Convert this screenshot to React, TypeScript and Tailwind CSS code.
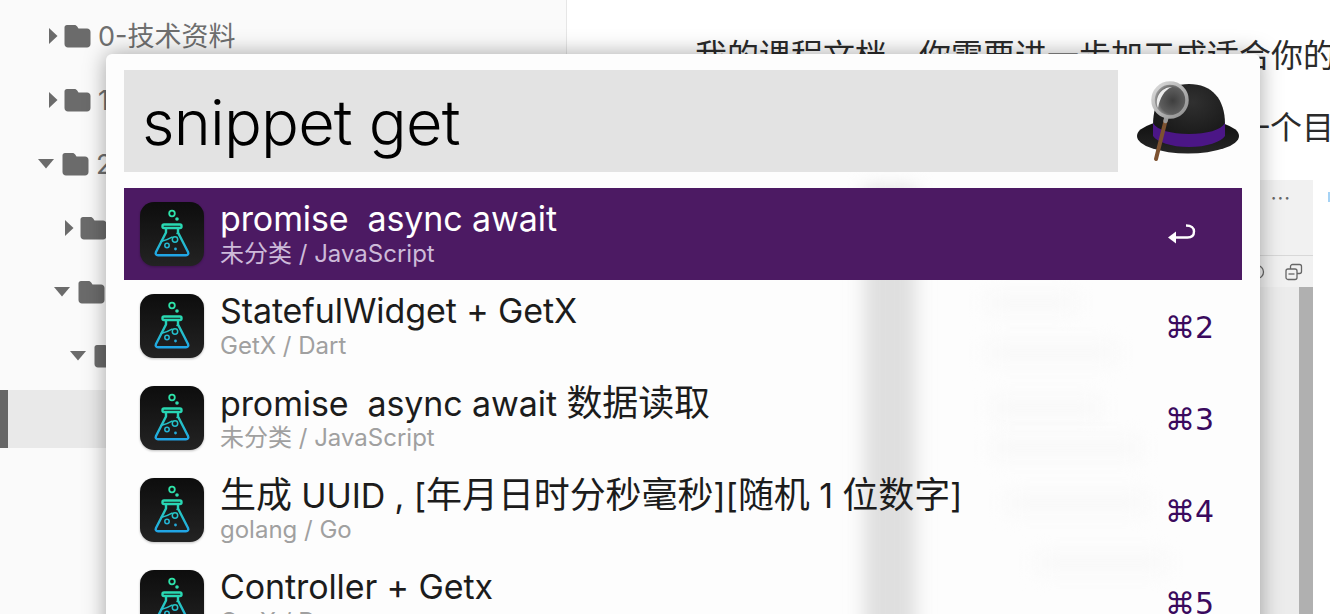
import { useId } from 'react';

const rows = [
  { title: 'promise  async await', sub: '未分类 / JavaScript', key: '↵', active: true },
  { title: 'StatefulWidget + GetX', sub: 'GetX / Dart', key: '⌘2' },
  { title: 'promise  async await 数据读取', sub: '未分类 / JavaScript', key: '⌘3' },
  { title: '生成 UUID , [年月日时分秒毫秒][随机 1 位数字]', sub: 'golang / Go', key: '⌘4' },
  { title: 'Controller + Getx', sub: 'GetX / Dart', key: '⌘5' },
];

const tree = [
  { indent: 46, open: false, label: '0-技术资料' },
  { indent: 46, open: false, label: '1-课程资料' },
  { indent: 38, open: true, label: '2-项目实战' },
  { indent: 62, open: false, label: '文档' },
  { indent: 54, open: true, label: '代码' },
  { indent: 70, open: true, label: '示例' },
];

// faint smudges of the blurred page showing through the launcher
const smudges = [
  { left: 880, top: 240, width: 90 },
  { left: 880, top: 290, width: 130 },
  { left: 885, top: 345, width: 110 },
  { left: 885, top: 385, width: 150 },
  { left: 900, top: 440, width: 140 },
  { left: 930, top: 500, width: 130 },
];

function Folder() {
  return (
    <svg width="28" height="24" viewBox="0 0 28 24" className="shrink-0">
      <path fill="#6b6b6b" d="M3 1h7.500c1.200 0 2 .6 2.700 1.600L14.500 4.500H23c2 0 3.500 1.400 3.500 3.500v12c0 2-1.500 3.500-3.500 3.500H4c-2 0-3.500-1.500-3.500-3.500V3.500C.5 2 1.500 1 3 1z" />
    </svg>
  );
}

function Arrow({ open }: { open: boolean }) {
  return open ? (
    <svg width="16" height="10" viewBox="0 0 16 10" className="mr-[8px] shrink-0">
      <path fill="#6b6b6b" d="M0 0h16L8 9.500z" />
    </svg>
  ) : (
    <svg width="10" height="16" viewBox="0 0 10 16" className="mr-[6px] ml-[2px] shrink-0">
      <path fill="#6b6b6b" d="M1 0l8.500 8L1 16z" />
    </svg>
  );
}

function FlaskIcon() {
  const id = useId();
  return (
    <svg width="64" height="64" viewBox="0 0 64 64" className="shrink-0 drop-shadow-[0_1px_1px_rgba(0,0,0,0.25)]">
      <defs>
        <linearGradient id={id + 'bg'} x1="0" y1="0" x2="0" y2="1">
          <stop offset="0" stopColor="#0d0d0d" />
          <stop offset="1" stopColor="#232323" />
        </linearGradient>
        <linearGradient id={id + 'fg'} gradientUnits="userSpaceOnUse" x1="32" y1="6" x2="32" y2="56">
          <stop offset="0" stopColor="#2fe8a6" />
          <stop offset="0.4" stopColor="#28d6b4" />
          <stop offset="1" stopColor="#20a0ea" />
        </linearGradient>
      </defs>
      <rect width="64" height="64" rx="14" fill={`url(#${id}bg)`} />
      <g fill="none" stroke={`url(#${id}fg)`} strokeWidth="2.400" strokeLinecap="round" strokeLinejoin="round">
        <circle cx="32" cy="11.500" r="2.800" strokeWidth="1.800" />
        <rect x="22.500" y="22.500" width="19" height="3.500" rx="1.500" />
        <path d="M26 26.500v4L16 50c-.9 2 .2 3.200 2 3.200h28c1.800 0 2.900-1.200 2-3.200L38 30.500v-4" />
        <path strokeWidth="1.500" d="M21 39.500c4-.8 8-2.500 11-4.300M37 31.500l1-.5" />
        <circle cx="35" cy="37.500" r="2.700" strokeWidth="1.500" />
        <circle cx="27" cy="43.500" r="2.200" strokeWidth="1.500" />
      </g>
      <circle cx="37" cy="17" r="1.800" fill="#2fdcae" />
      <circle cx="35.500" cy="47" r="1.400" fill="#24a9d8" />
    </svg>
  );
}

function HatIcon() {
  return (
    <svg width="110" height="88" viewBox="0 0 110 88" className="shrink-0">
      <defs>
        <radialGradient id="crown" cx="0.55" cy="0.3" r="0.8">
          <stop offset="0" stopColor="#303030" />
          <stop offset="1" stopColor="#121212" />
        </radialGradient>
        <radialGradient id="glass" cx="0.58" cy="0.52" r="0.55">
          <stop offset="0" stopColor="#3e3e3e" />
          <stop offset="0.7" stopColor="#5e5e5e" />
          <stop offset="1" stopColor="#a8a8a8" />
        </radialGradient>
        <linearGradient id="ring" x1="0" y1="0" x2="1" y2="1">
          <stop offset="0" stopColor="#dedede" />
          <stop offset="1" stopColor="#8c8c8c" />
        </linearGradient>
        <linearGradient id="brim" x1="0" y1="0" x2="0" y2="1">
          <stop offset="0" stopColor="#0e0e0e" />
          <stop offset="1" stopColor="#262626" />
        </linearGradient>
      </defs>
      <ellipse cx="54" cy="59" rx="51" ry="17.500" fill="url(#brim)" />
      <path d="M19 48C19 22 32 7 55 7s36 15 36 40c0 12-14 20-36 20S19 60 19 48z" fill="url(#crown)" />
      <path d="M19 46c4 7 18 11 36 11s32-4 36-11v13c-4 6-18 11-36 11S23 65 19 59z" fill="#4b1686" />
      <path d="M32 42L22 82" stroke="#7d5230" strokeWidth="4" strokeLinecap="round" />
      <path d="M34 35l-2.500 9" stroke="#9a9a9a" strokeWidth="4.500" strokeLinecap="round" />
      <circle cx="36" cy="23" r="17" fill="url(#glass)" stroke="url(#ring)" strokeWidth="3.500" />
      <path d="M24 31C20 21 27 10 38 10 30 13 26 21 24 31z" fill="#ececec" />
    </svg>
  );
}

function ReturnGlyph() {
  return (
    <svg width="30" height="24" viewBox="0 0 30 24" className="mt-[4px] mr-[17px] text-white">
      <path d="M5 13.500h15.500c4.500 0 6.500-2.500 6.500-6s-2.500-6-8-6" fill="none" stroke="currentColor" strokeWidth="2.400" />
      <path d="M1 13.500l8-6v12z" fill="currentColor" />
    </svg>
  );
}

// CJK runs sit a little larger than the Latin around them
function Title({ text }: { text: string }) {
  return (
    <>
      {text.split(/([\u4e00-\u9fff]+)/).map((part, i) =>
        /[\u4e00-\u9fff]/.test(part) ? (
          <span key={i} className="text-[36px]">{part}</span>
        ) : (
          <span key={i}>{part}</span>
        ),
      )}
    </>
  );
}

export default function App() {
  return (
    <div className="relative flex h-[614px] w-[1330px] overflow-hidden bg-white font-['Inter','Noto_Sans_CJK_SC',sans-serif]">
      {/* sidebar */}
      <aside className="w-[567px] shrink-0 border-r border-[#e6e6e6] bg-[#fafafa] pt-[4px]">
        {tree.map((t) => (
          <div key={t.label} className="flex h-[64px] items-center" style={{ paddingLeft: t.indent }}>
            <Arrow open={t.open} />
            <Folder />
            <span className="mt-[3px] ml-[6px] whitespace-nowrap text-[27px] text-[#6f6f6f]">{t.label}</span>
          </div>
        ))}
        <div className="mt-[2px] h-[58px] border-l-[8px] border-[#666] bg-[#e9e9e9]" />
      </aside>

      {/* document behind the launcher */}
      <main className="min-w-0 flex-1 overflow-hidden pt-[20px] pl-[128px] text-[#2b2b2b]">
        <p className="h-[72px] whitespace-nowrap text-[32px] leading-[72px]">我的课程文档，你需要进一步加工成适合你的文档</p>
        <p className="ml-[543px] h-[72px] whitespace-nowrap text-[32px] leading-[72px]">一个目录</p>
        <div className="relative mt-[16px] ml-[165px] mr-[17px] h-[500px] bg-[#f1f1f1]">
          <div className="absolute top-[12px] -right-[17px] h-[10px] w-[2px] bg-[#a6d3f5]" />
          <div className="flex h-[76px] items-start justify-end border-b border-[#d8d8d8] pt-[10px] pr-[22px] text-[20px] leading-[16px] tracking-[1px] text-[#666]">
            ···
          </div>
          <div className="flex h-[31px] items-center justify-end gap-[18px] pr-[10px]">
            <svg width="16" height="16" viewBox="0 0 16 16"><circle cx="6" cy="8" r="6.500" fill="none" stroke="#666" strokeWidth="1.300" /></svg>
            <svg width="18" height="18" viewBox="0 0 18 18" fill="none" stroke="#666" strokeWidth="1.300">
              <rect x="5.500" y="1.500" width="11" height="9" rx="2" />
              <rect x="1" y="6" width="11" height="10.500" rx="2" fill="#f1f1f1" />
              <path d="M3.500 11h6" />
            </svg>
          </div>
          <div className="flex h-full justify-end bg-[#ececec]">
            <div className="w-[14px] bg-[#b0b0b0]" />
          </div>
        </div>
      </main>

      {/* launcher window */}
      <section className="absolute top-[54px] left-[106px] h-[600px] w-[1154px] overflow-hidden rounded-t-[6px] bg-[#fdfdfd] shadow-[0_0_22px_rgba(0,0,0,0.35)]">
        <div className="absolute top-[134px] left-[758px] h-[480px] w-[52px] bg-[#dfdfdf] blur-[9px]" />
        {smudges.map((s) => (
          <div
            key={s.top}
            className="absolute h-[18px] bg-[#f8f8f8] blur-[10px]"
            style={{ left: s.left, top: s.top, width: s.width }}
          />
        ))}
        <div className="relative flex flex-col px-[18px] pt-[16px]">
          <div className="flex h-[102px] items-center">
            <div className="flex h-full flex-1 items-center bg-[#e3e3e3] pt-[3px] pl-[18px] text-[63px] leading-none font-light tracking-[-0.8px] text-black">
              snippet get
            </div>
            <div className="w-[124px] pl-[16px]">
              <HatIcon />
            </div>
          </div>
          <div className="mt-[16px]">
            {rows.map((r) => (
              <div
                key={r.title}
                className={
                  r.active
                    ? 'flex h-[92px] items-center bg-[#4c1a63] pr-[28px] pl-[16px]'
                    : 'flex h-[92px] items-center pr-[28px] pl-[16px]'
                }
              >
                <FlaskIcon />
                <div className="ml-[16px] min-w-0 flex-1 pt-[2px]">
                  <div className={r.active ? 'h-[38px] whitespace-pre text-[34px] leading-[36px] tracking-[-0.1px] text-white' : 'h-[38px] whitespace-pre text-[34px] leading-[36px] tracking-[-0.1px] text-[#1c1c1c]'}>
                    <Title text={r.title} />
                  </div>
                  <div className={r.active ? 'text-[24px] leading-[30px] text-[#cdbad9]' : 'text-[24px] leading-[30px] text-[#a0a0a0]'}>
                    {r.sub}
                  </div>
                </div>
                {r.active ? (
                  <ReturnGlyph />
                ) : (
                  <span className="mt-[4px] font-['DejaVu_Sans','Inter',sans-serif] text-[30px] leading-none text-[#3a0a5e]">{r.key}</span>
                )}
              </div>
            ))}
          </div>
        </div>
      </section>
    </div>
  );
}
